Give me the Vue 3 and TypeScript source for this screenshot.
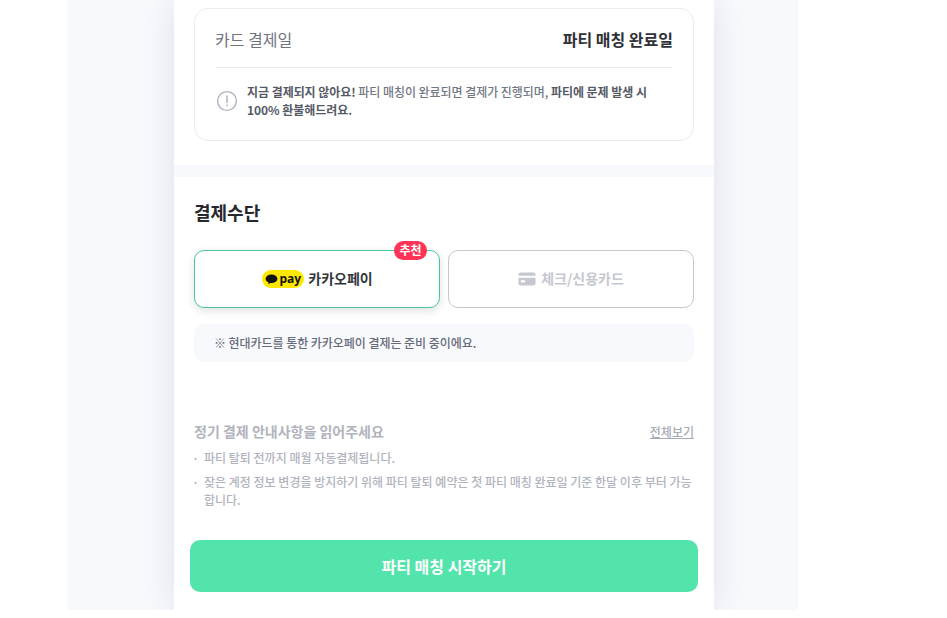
<script setup lang="ts">
const notices = [
  '파티 탈퇴 전까지 매월 자동결제됩니다.',
  '잦은 계정 정보 변경을 방지하기 위해 파티 탈퇴 예약은 첫 파티 매칭 완료일 기준 한달 이후 부터 가능합니다.',
]
</script>

<template>
  <div class="backdrop">
    <main class="sheet">
      <section class="summary">
        <div class="summary-box">
          <div class="summary-row">
            <span class="summary-label">카드 결제일</span>
            <strong class="summary-value">파티 매칭 완료일</strong>
          </div>
          <div class="summary-note">
            <svg class="note-icon" width="22" height="22" viewBox="0 0 22 22" fill="none">
              <circle cx="11" cy="11" r="9.4" stroke="#aeb2c0" stroke-width="1.4" />
              <path d="M11 6v6.4" stroke="#aeb2c0" stroke-width="1.5" stroke-linecap="round" />
              <circle cx="11" cy="15.4" r="0.9" fill="#aeb2c0" />
            </svg>
            <p>
              <b>지금 결제되지 않아요!</b> 파티 매칭이 완료되면 결제가 진행되며, <b>파티에 문제 발생 시 100% 환불해드려요.</b>
            </p>
          </div>
        </div>
      </section>

      <div class="divider"></div>

      <section class="payment">
        <h2>결제수단</h2>
        <div class="methods">
          <button class="method method--active" type="button">
            <span class="badge">추천</span>
            <span class="kakao">
              <svg width="13" height="11" viewBox="0 0 14 11">
                <ellipse cx="7" cy="4.8" rx="6.4" ry="4.6" fill="#111" />
                <path d="M4 7.5 3.6 10.6 6.8 8.6z" fill="#111" />
              </svg>
              <span class="kakao-pay">pay</span>
            </span>
            <span class="method-label">카카오페이</span>
          </button>
          <button class="method method--card" type="button">
            <svg width="18" height="14" viewBox="0 0 18 14">
              <path d="M2.5 0.5h13a2 2 0 0 1 2 2v1.3H.5V2.5a2 2 0 0 1 2-2z" fill="#c5c8d0" />
              <path d="M.5 5.8h17v5.7a2 2 0 0 1-2 2h-13a2 2 0 0 1-2-2z" fill="#c5c8d0" />
              <rect x="2.8" y="8.2" width="4.4" height="2.2" rx="0.6" fill="#fff" />
            </svg>
            <span class="method-label">체크/신용카드</span>
          </button>
        </div>
        <p class="method-hint">※ 현대카드를 통한 카카오페이 결제는 준비 중이에요.</p>
      </section>

      <section class="terms">
        <div class="terms-head">
          <h3>정기 결제 안내사항을 읽어주세요</h3>
          <a href="#" class="terms-all">전체보기</a>
        </div>
        <ul>
          <li v-for="notice in notices" :key="notice">{{ notice }}</li>
        </ul>
      </section>

      <button class="submit" type="button">파티 매칭 시작하기</button>
    </main>
  </div>
</template>

<style>
html,
body {
  margin: 0;
  background: #fff;
  overflow: hidden;
}
</style>

<style scoped>
.backdrop {
  width: 731px;
  height: 610px;
  margin-left: 67px;
  padding-left: 107px;
  box-sizing: border-box;
  overflow: hidden;
  background: #f8f9fd;
  font-family: "Noto Sans CJK KR", "Noto Sans", sans-serif;
}

.sheet {
  width: 540px;
  height: 610px;
  background: #fff;
  box-shadow: 0 0 32px rgba(30, 34, 60, 0.11);
}

.summary {
  padding: 8px 20px 24px;
}

.summary-box {
  height: 133px;
  box-sizing: border-box;
  padding: 0 20px;
  border: 1px solid #ebecef;
  border-radius: 14px;
}

.summary-row {
  display: flex;
  justify-content: space-between;
  align-items: center;
  height: 57px;
  padding-top: 1px;
  border-bottom: 1px solid #ebecef;
}

.summary-label {
  font-size: 16px;
  color: #6f7480;
}

.summary-value {
  font-size: 16px;
  font-weight: 700;
  color: #2f3238;
}

.summary-note {
  display: flex;
  align-items: center;
  gap: 9px;
  margin-top: 15px;
}

.note-icon {
  flex: none;
  margin-left: 1px;
}

.summary-note p {
  margin: 0;
  font-size: 12px;
  font-weight: 500;
  line-height: 18px;
  letter-spacing: -0.05px;
  color: #737885;
}

.summary-note b {
  font-weight: 700;
  color: #555a66;
}

.divider {
  height: 12px;
  background: #f8f9fd;
}

.payment {
  padding: 0 20px;
}

.payment h2 {
  margin: 22px 0 0;
  font-size: 18px;
  line-height: 26px;
  font-weight: 700;
  color: #26282d;
}

.methods {
  display: flex;
  gap: 8px;
  margin-top: 25px;
}

.method {
  position: relative;
  flex: 1;
  display: flex;
  justify-content: center;
  align-items: center;
  gap: 5px;
  height: 58px;
  padding: 0;
  background: #fff;
  border-radius: 10px;
  font-family: inherit;
  font-size: 14px;
  font-weight: 700;
}

.method-label {
  margin-top: -2px;
}

.method--active {
  gap: 4px;
  border: 1px solid #49c896;
  color: #34373d;
  box-shadow: 0 3px 8px rgba(30, 34, 60, 0.13);
}

.method--card {
  border: 1px solid #c6c7d0;
  color: #c5c8d0;
}

.badge {
  position: absolute;
  top: -10px;
  right: 12px;
  width: 33px;
  height: 19px;
  border-radius: 10px;
  background: #ff3355;
  color: #fff;
  font-size: 12px;
  line-height: 18px;
  text-align: center;
}

.kakao {
  display: inline-flex;
  align-items: center;
  justify-content: center;
  gap: 1px;
  width: 42px;
  height: 18px;
  margin-left: 1px;
  border-radius: 9px;
  background: #ffe800;
  color: #111;
}

.kakao-pay {
  font-family: "Open Sans", sans-serif;
  font-size: 12px;
  line-height: 18px;
  font-weight: 700;
}

.method-hint {
  margin: 16px 0 0;
  height: 38px;
  padding-left: 20px;
  border-radius: 10px;
  background: #f8f9fd;
  color: #666b78;
  font-size: 12px;
  font-weight: 500;
  letter-spacing: -0.05px;
  line-height: 37px;
}

.terms {
  margin-top: 58px;
  padding: 0 20px;
}

.terms-head {
  display: flex;
  justify-content: space-between;
  align-items: center;
}

.terms-head h3 {
  margin: 0;
  font-size: 14px;
  line-height: 22px;
  font-weight: 700;
  color: #b1b4be;
}

.terms-all {
  font-size: 12px;
  font-weight: 500;
  color: #a7abb6;
}

.terms ul {
  margin: 7px 0 0;
  padding: 0;
  list-style: none;
}

.terms li {
  position: relative;
  padding-left: 10px;
  font-size: 12px;
  font-weight: 500;
  line-height: 18px;
  color: #b1b4be;
  margin-bottom: 6px;
}

.terms li::before {
  content: "·";
  position: absolute;
  left: -2px;
  top: 0;
}

.submit {
  display: block;
  width: 508px;
  height: 52px;
  margin: 31px 0 0 16px;
  border: 0;
  border-radius: 10px;
  background: #53e4ac;
  color: #fff;
  font-family: inherit;
  font-size: 16px;
  font-weight: 700;
}
</style>
